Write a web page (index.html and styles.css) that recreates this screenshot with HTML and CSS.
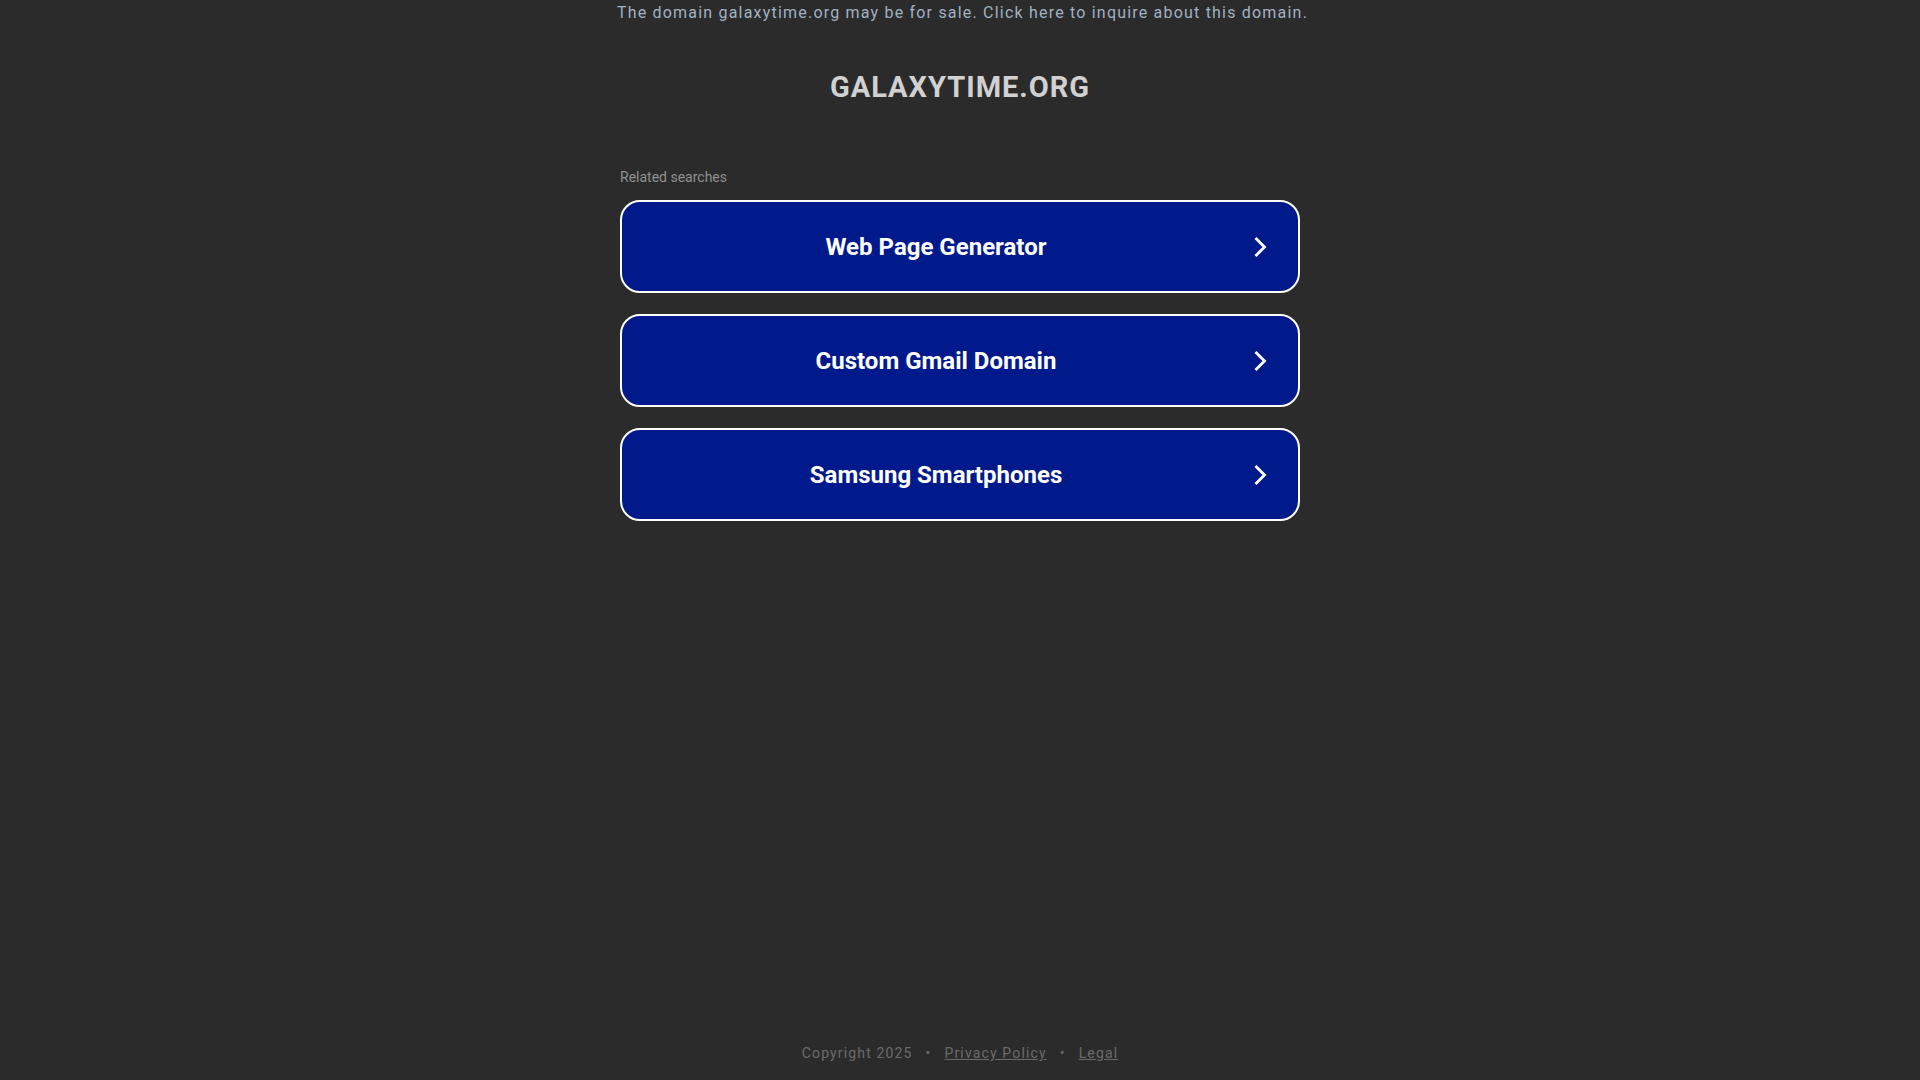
FILE: index.html
```html
<!DOCTYPE html>
<html lang="en">
<head>
<meta charset="utf-8">
<title>galaxytime.org</title>
<link rel="stylesheet" href="styles.css">
</head>
<body>
<div class="page">
  <header class="announce">
    <a href="#" class="announce-link">The domain galaxytime.org may be for sale. Click here to inquire about this domain.</a>
  </header>
  <main class="content">
    <h1 class="domain">GALAXYTIME.ORG</h1>
    <section class="related">
      <p class="related-title">Related searches</p>
      <div class="links">
        <a href="#" class="search-btn"><span class="search-label">Web Page Generator</span><span class="chev"><svg viewBox="0 0 24 24" width="24" height="24"><path d="M7.5 3 L16.5 12 L7.5 21" fill="none" stroke="#fff" stroke-width="2.8" stroke-linecap="butt" stroke-linejoin="miter"/></svg></span></a>
        <a href="#" class="search-btn"><span class="search-label">Custom Gmail Domain</span><span class="chev"><svg viewBox="0 0 24 24" width="24" height="24"><path d="M7.5 3 L16.5 12 L7.5 21" fill="none" stroke="#fff" stroke-width="2.8" stroke-linecap="butt" stroke-linejoin="miter"/></svg></span></a>
        <a href="#" class="search-btn"><span class="search-label">Samsung Smartphones</span><span class="chev"><svg viewBox="0 0 24 24" width="24" height="24"><path d="M7.5 3 L16.5 12 L7.5 21" fill="none" stroke="#fff" stroke-width="2.8" stroke-linecap="butt" stroke-linejoin="miter"/></svg></span></a>
      </div>
    </section>
  </main>
  <footer class="footer">
    <span>Copyright 2025</span>
    <span class="sep">•</span>
    <a href="#" class="foot-link">Privacy Policy</a>
    <span class="sep">•</span>
    <a href="#" class="foot-link">Legal</a>
  </footer>
</div>
</body>
</html>
```

FILE: styles.css
```css
html, body {
  margin: 0;
  padding: 0;
  background: #2b2b2b;
  font-family: Roboto, "Liberation Sans", Arial, sans-serif;
}

.page {
  min-height: 100vh;
  display: flex;
  flex-direction: column;
  align-items: center;
  box-sizing: border-box;
}

.announce {
  padding-top: 2px;
  padding-left: 5px;
  text-align: center;
}

.announce-link {
  color: #a1b1c1;
  font-size: 16px;
  letter-spacing: 1.2px;
  line-height: 22px;
  text-decoration: none;
}

.content {
  display: flex;
  flex-direction: column;
  align-items: center;
  width: 680px;
}

.domain {
  margin: 45px 0 0;
  font-size: 29px;
  font-weight: 700;
  letter-spacing: 1px;
  line-height: 36px;
  color: #d1d1d1;
}

.related {
  width: 680px;
  margin-top: 63px;
}

.related-title {
  margin: 0 0 14px;
  font-size: 14px;
  line-height: 18px;
  color: #909090;
}

.links {
  display: flex;
  flex-direction: column;
  gap: 21px;
}

.search-btn {
  display: flex;
  align-items: center;
  height: 93px;
  box-sizing: border-box;
  border: 2px solid #ffffff;
  border-radius: 20px;
  background: #011a8b;
  padding: 0 26px 0 2px;
  text-decoration: none;
}

.search-label {
  flex: 1;
  text-align: center;
  color: #ffffff;
  font-size: 24px;
  font-weight: 700;
}

.chev {
  width: 24px;
  height: 24px;
  display: flex;
}

.footer {
  margin-top: auto;
  padding-bottom: 17px;
  display: flex;
  gap: 13px;
  font-size: 14px;
  letter-spacing: 1.15px;
  line-height: 20px;
  color: #6b6b6b;
}

.foot-link {
  color: #6b6b6b;
  text-decoration: underline;
}
```
